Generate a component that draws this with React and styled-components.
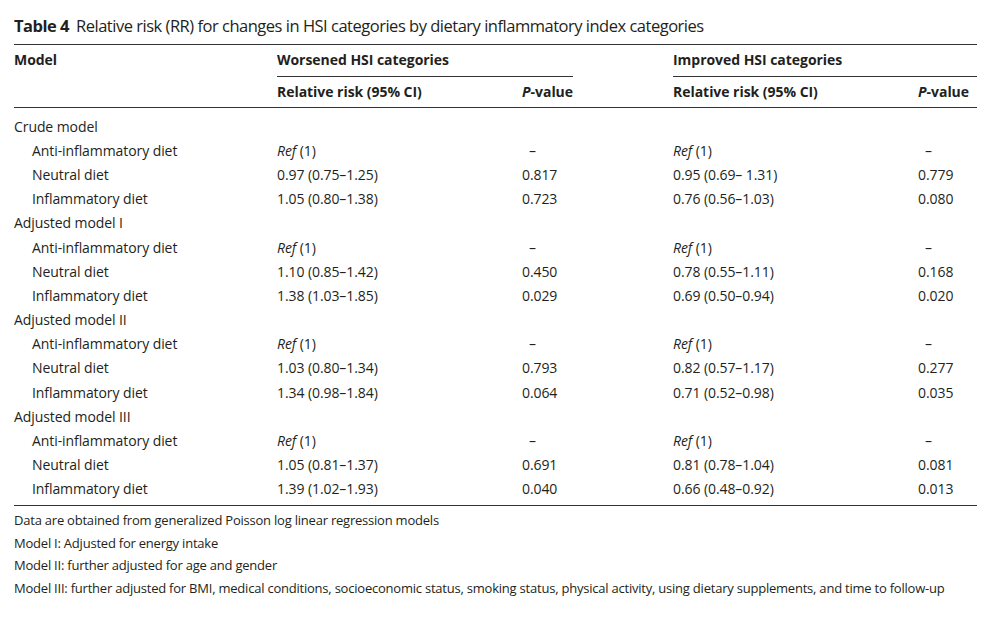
import React from 'react';
import styled, { createGlobalStyle } from 'styled-components';

const GlobalStyle = createGlobalStyle`
  body {
    margin: 0;
    background: #ffffff;
    font-family: "Open Sans", "Liberation Sans", sans-serif;
    color: #231f20;
  }
`;

const Page = styled.div`
  width: 963px;
  padding: 14px 0 0 14px;
`;

const Caption = styled.div`
  font-size: 16.5px;
  line-height: 24px;
  letter-spacing: -0.49px;
  margin-bottom: 6px;
  white-space: nowrap;

  b {
    font-weight: 700;
    margin-right: 7px;
  }
`;

const Table = styled.table`
  width: 963px;
  border-collapse: collapse;
  table-layout: fixed;
  font-size: 14px;
  letter-spacing: -0.08px;
  border-top: 1px solid #333;
  border-bottom: 1px solid #333;
`;

const Th = styled.th`
  font-weight: 700;
  letter-spacing: -0.04px;
  text-align: ${p => (p.$right ? 'right' : 'left')};
  vertical-align: middle;
  height: 29px;
  padding: 0 ${p => p.$padRight || 0}px 2px 0;
  white-space: nowrap;
  border-bottom: ${p => (p.$rule ? '1px solid #333' : 'none')};

  i {
    font-style: italic;
  }
`;

const HeadRow = styled.tr`
  &:last-child th {
    height: 28px;
    border-bottom: 1px solid #333;
  }
`;

const Td = styled.td`
  padding: 0 0 0 ${p => p.$indent || 0}px;
  height: 24.2px;
  white-space: nowrap;
  vertical-align: middle;

  i {
    font-style: italic;
  }
`;

const BodyRow = styled.tr`
  &:first-child td {
    padding-top: 6px;
  }
  &:last-child td {
    padding-bottom: 4px;
  }
`;

const Notes = styled.div`
  padding-top: 3px;
  font-size: 13px;
  letter-spacing: -0.22px;
  line-height: 22.67px;
`;

const groups = [
  {
    name: 'Crude model',
    rows: [
      ['Anti-inflammatory diet', null, '–', null, '–'],
      ['Neutral diet', '0.97 (0.75–1.25)', '0.817', '0.95 (0.69– 1.31)', '0.779'],
      ['Inflammatory diet', '1.05 (0.80–1.38)', '0.723', '0.76 (0.56–1.03)', '0.080'],
    ],
  },
  {
    name: 'Adjusted model I',
    rows: [
      ['Anti-inflammatory diet', null, '–', null, '–'],
      ['Neutral diet', '1.10 (0.85–1.42)', '0.450', '0.78 (0.55–1.11)', '0.168'],
      ['Inflammatory diet', '1.38 (1.03–1.85)', '0.029', '0.69 (0.50–0.94)', '0.020'],
    ],
  },
  {
    name: 'Adjusted model II',
    rows: [
      ['Anti-inflammatory diet', null, '–', null, '–'],
      ['Neutral diet', '1.03 (0.80–1.34)', '0.793', '0.82 (0.57–1.17)', '0.277'],
      ['Inflammatory diet', '1.34 (0.98–1.84)', '0.064', '0.71 (0.52–0.98)', '0.035'],
    ],
  },
  {
    name: 'Adjusted model III',
    rows: [
      ['Anti-inflammatory diet', null, '–', null, '–'],
      ['Neutral diet', '1.05 (0.81–1.37)', '0.691', '0.81 (0.78–1.04)', '0.081'],
      ['Inflammatory diet', '1.39 (1.02–1.93)', '0.040', '0.66 (0.48–0.92)', '0.013'],
    ],
  },
];

const notes = [
  'Data are obtained from generalized Poisson log linear regression models',
  'Model I: Adjusted for energy intake',
  'Model II: further adjusted for age and gender',
  'Model III: further adjusted for BMI, medical conditions, socioeconomic status, smoking status, physical activity, using dietary supplements, and time to follow-up',
];

const Ref = () => (
  <>
    <i>Ref</i> (1)
  </>
);

export default function App() {
  const bodyRows = [];
  groups.forEach(g => {
    bodyRows.push(
      <BodyRow key={g.name}>
        <Td colSpan={6}>{g.name}</Td>
      </BodyRow>
    );
    g.rows.forEach(r => {
      bodyRows.push(
        <BodyRow key={g.name + r[0]}>
          <Td $indent={18}>{r[0]}</Td>
          <Td>{r[1] === null ? <Ref /> : r[1]}</Td>
          <Td $indent={r[2] === '–' ? 7 : 0}>{r[2]}</Td>
          <Td />
          <Td>{r[3] === null ? <Ref /> : r[3]}</Td>
          <Td $indent={r[4] === '–' ? 7 : 0}>{r[4]}</Td>
        </BodyRow>
      );
    });
  });

  return (
    <Page>
      <GlobalStyle />
      <Caption>
        <b>Table 4</b>Relative risk (RR) for changes in HSI categories by dietary inflammatory index categories
      </Caption>
      <Table>
        <colgroup>
          <col style={{ width: 263 }} />
          <col style={{ width: 245 }} />
          <col style={{ width: 51 }} />
          <col style={{ width: 100 }} />
          <col style={{ width: 245 }} />
          <col style={{ width: 59 }} />
        </colgroup>
        <thead>
          <tr>
            <Th>Model</Th>
            <Th colSpan={2} $rule>Worsened HSI categories</Th>
            <Th />
            <Th colSpan={2} $rule>Improved HSI categories</Th>
          </tr>
          <HeadRow>
            <Th />
            <Th>Relative risk (95% CI)</Th>
            <Th $right><i>P</i>-value</Th>
            <Th />
            <Th>Relative risk (95% CI)</Th>
            <Th $right $padRight={8}><i>P</i>-value</Th>
          </HeadRow>
        </thead>
        <tbody>{bodyRows}</tbody>
      </Table>
      <Notes>
        {notes.map(n => (
          <div key={n}>{n}</div>
        ))}
      </Notes>
    </Page>
  );
}
